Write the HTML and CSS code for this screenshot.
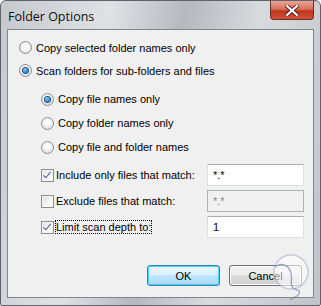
FILE: index.html
```html
<!DOCTYPE html>
<html lang="en">
  <head>
    <meta charset="UTF-8" />
    <title>Folder Options</title>
    <link rel="stylesheet" href="styles.css">
  </head>
  <body>
    <div class="window">
      <div class="titlebar">
        <span class="title">Folder Options</span>
        <div class="closeButton">
          <svg width="14" height="11" viewBox="0 0 14 11">
            <path d="M2 1 L12 10 M12 1 L2 10" stroke="#5a1a14" stroke-width="4" stroke-linecap="square" />
            <path d="M2 1 L12 10 M12 1 L2 10" stroke="#ffffff" stroke-width="2.2" stroke-linecap="square" />
          </svg>
        </div>
      </div>

      <div class="client">
        <div class="group topGroup">
          <div class="row">
            <span class="radio"></span>
            <span class="label">Copy selected folder names only</span>
          </div>
          <div class="row">
            <span class="radio checked"></span>
            <span class="label">Scan folders for sub-folders and files</span>
          </div>
        </div>

        <div class="group subGroup">
          <div class="row">
            <span class="radio checked"></span>
            <span class="label">Copy file names only</span>
          </div>
          <div class="row">
            <span class="radio"></span>
            <span class="label">Copy folder names only</span>
          </div>
          <div class="row">
            <span class="radio"></span>
            <span class="label">Copy file and folder names</span>
          </div>
        </div>

        <div class="group checkGroup">
          <div class="row">
            <span class="checkbox checked"></span>
            <span class="label">Include only files that match:</span>
            <span class="textbox">*.*</span>
          </div>
          <div class="row">
            <span class="checkbox"></span>
            <span class="label">Exclude files that match:</span>
            <span class="textbox disabled">*.*</span>
          </div>
          <div class="row">
            <span class="checkbox checked"></span>
            <span class="label focused">Limit scan depth to:</span>
            <span class="textbox">1</span>
          </div>
        </div>

        <div class="buttons">
          <div class="button default">OK</div>
          <div class="button">Cancel</div>
        </div>

        <svg class="watermark" width="46" height="50" viewBox="0 0 46 50">
          <circle cx="22" cy="19" r="17" fill="rgba(255,255,255,0.55)" stroke="rgba(150,170,200,0.55)" stroke-width="1.5" />
          <path d="M6 14 C12 9 20 12 22 20 C24 27 20 30 24 35 C28 38 32 36 30 41 C28 45 22 44 22 47" fill="none" stroke="rgba(110,130,175,0.7)" stroke-width="1.3" />
        </svg>
      </div>
    </div>
  </body>
</html>
```

FILE: styles.css
```css
body {
  margin: 0;
  background-color: #ffffff;
  font-family: "Liberation Sans", Arial, sans-serif;
  font-size: 11px;
  color: #000000;
}

.window {
  width: 321px;
  height: 306px;
  box-sizing: border-box;
  display: flex;
  flex-direction: column;
  border: 1px solid #5f6368;
  border-radius: 6px 6px 2px 2px;
  background: linear-gradient(100deg, #c5c9cd 0%, #dfe2e5 30%, #b5b9bd 50%, #d8dbde 70%, #c0c4c8 100%);
}

.titlebar {
  height: 28px;
  display: flex;
  align-items: flex-start;
  padding-left: 7px;
  flex-shrink: 0;
}

.title {
  margin-top: 7px;
  font-family: "Open Sans", "Liberation Sans", sans-serif;
  font-size: 12.5px;
  color: #111111;
}

.closeButton {
  margin-left: auto;
  margin-right: 6px;
  width: 44px;
  height: 19px;
  box-sizing: border-box;
  border: 1px solid #6d2c24;
  border-top: none;
  border-radius: 0 0 4px 4px;
  background: linear-gradient(#e8a293 0%, #d6735f 45%, #c0341c 55%, #d4523a 100%);
  display: flex;
  align-items: center;
  justify-content: center;
}

.client {
  position: relative;
  flex: 1;
  margin: 0 6px 7px 6px;
  border: 1px solid #80868c;
  background-color: #f0f0f0;
  padding-top: 6px;
}

.group {
  display: flex;
  flex-direction: column;
}

.row {
  display: flex;
  align-items: center;
}

.topGroup {
  padding-left: 11px;
}

.topGroup .row {
  height: 23px;
}

.subGroup {
  margin-top: 5px;
  padding-left: 33px;
}

.subGroup .row {
  height: 24px;
}

.checkGroup {
  margin-top: 3px;
  padding-left: 33px;
}

.checkGroup .row {
  height: 26px;
}

.label {
  margin-left: 4px;
  white-space: nowrap;
}

.checkGroup .label {
  margin-left: 2px;
}

.radio {
  width: 13px;
  height: 13px;
  box-sizing: border-box;
  border-radius: 50%;
  border: 1px solid #8c8e90;
  background: radial-gradient(circle at 50% 40%, #ffffff 0%, #f4f4f4 40%, #d4d4d4 100%);
  display: flex;
  align-items: center;
  justify-content: center;
}

.radio.checked::after {
  content: "";
  width: 5px;
  height: 5px;
  border-radius: 50%;
  background: radial-gradient(circle at 40% 35%, #8fd1f8 0%, #2a7fc9 60%, #17488a 100%);
  box-shadow: 0 0 0 1px #1c4f8c;
}

.checkbox {
  width: 13px;
  height: 13px;
  box-sizing: border-box;
  border: 1px solid #8c8e90;
  background: linear-gradient(135deg, #e2e2e2 0%, #f6f6f6 60%, #ffffff 100%);
  box-shadow: inset 0 0 0 1px #f4f4f4;
  position: relative;
}

.checkbox.checked::after {
  content: "";
  position: absolute;
  left: 3px;
  top: 0px;
  width: 3px;
  height: 7px;
  border: solid #4a5f97;
  border-width: 0 1.5px 1.5px 0;
  transform: rotate(40deg);
}

.focused {
  outline: 1px dotted #000000;
  outline-offset: 0;
}

.textbox {
  margin-left: auto;
  margin-right: 9px;
  width: 97px;
  height: 22px;
  box-sizing: border-box;
  border: 1px solid #dbdfe6;
  border-top-color: #abadb3;
  background-color: #ffffff;
  padding-left: 5px;
  display: flex;
  align-items: center;
}

.textbox.disabled {
  background-color: #f0f0f0;
  border-color: #adb2b5;
  color: #8a8a8a;
}

.buttons {
  display: flex;
  justify-content: flex-end;
  gap: 9px;
  margin-top: 25px;
  padding-right: 11px;
}

.button {
  width: 73px;
  height: 21px;
  box-sizing: border-box;
  border: 1px solid #707070;
  border-radius: 3px;
  background: linear-gradient(#f2f2f2 0%, #ebebeb 49%, #dddddd 50%, #cfcfcf 100%);
  box-shadow: inset 0 0 0 1px #fcfcfc;
  display: flex;
  align-items: center;
  justify-content: center;
}

.button.default {
  border-color: #3c7fb1;
  background: linear-gradient(#eaf6fd 0%, #d9f0fc 49%, #bee6fd 50%, #a7d9f5 100%);
  box-shadow: inset 0 0 0 1px #48d0f9;
}

.watermark {
  position: absolute;
  right: -2px;
  bottom: -6px;
}
```
